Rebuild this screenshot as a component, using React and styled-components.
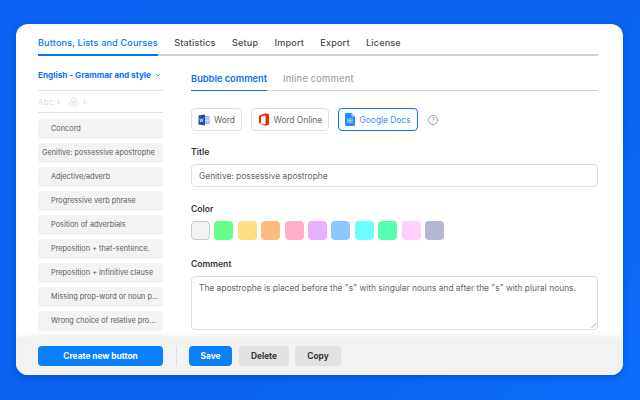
import styled, {createGlobalStyle} from 'styled-components';
import {ChevronDown, ArrowDown} from 'lucide-react';

const GlobalStyle = createGlobalStyle`
  html, body {
    margin: 0;
    padding: 0;
    width: 640px;
    height: 400px;
    overflow: hidden;
  }
  body {
    font-family: "Inter", "Liberation Sans", sans-serif;
  }
`;

const navItems = ['Statistics', 'Setup', 'Import', 'Export', 'License'];

const listItems = [
  {label: 'Concord'},
  {label: 'Genitive: possessive apostrophe', wide: true},
  {label: 'Adjective/adverb'},
  {label: 'Progressive verb phrase'},
  {label: 'Position of adverbials'},
  {label: 'Preposition + that-sentence.'},
  {label: 'Preposition + infinitive clause'},
  {label: 'Missing prop-word or noun p...'},
  {label: 'Wrong choice of relative pro...'},
  {label: ''}
];

const colors = ['#f2f2f2', '#66ff8c', '#ffdf80', '#ffbb80', '#ffb0c8', '#e8b0ff', '#8cc8ff', '#6cfdff', '#55ffb0', '#ffd0fa', '#b3b6d4'];

const Page = styled.div`
  width: 640px;
  height: 400px;
  box-sizing: border-box;
  padding: 24px 17px 25px 16px;
  background: linear-gradient(135deg, #0a62f2 0%, #0864ee 60%, #0a6dfa 100%);
`;

const Card = styled.div`
  height: 100%;
  display: flex;
  flex-direction: column;
  background: #fff;
  border-radius: 12px;
  overflow: hidden;
  box-shadow: 0 2px 6px rgba(0, 40, 140, 0.35);
`;

const Nav = styled.nav`
  display: flex;
  gap: 16.4px;
  height: 30px;
  margin: 0 25px 0 22px;
  border-bottom: 2px solid #ccd1d6;
  flex-shrink: 0;
`;

const NavItem = styled.div`
  height: 32px;
  box-sizing: border-box;
  line-height: 37px;
  font-size: 9.1px;
  font-weight: 500;
  letter-spacing: 0.15px;
  white-space: nowrap;
  color: ${props => props.$active ? '#0a73f5' : '#4a4d50'};
  border-bottom: 2px solid ${props => props.$active ? '#0a73f5' : 'transparent'};
`;

const Main = styled.div`
  flex: 1;
  min-height: 0;
  display: flex;
  gap: 28px;
  padding: 0 25px 0 22px;
  overflow: hidden;
`;

const Sidebar = styled.div`
  width: 125px;
  flex-shrink: 0;
`;

const LanguageSelect = styled.div`
  height: 35px;
  box-sizing: border-box;
  display: flex;
  align-items: center;
  gap: 3px;
  padding-top: 4px;
  border-bottom: 1px solid #dfe1e4;
  font-size: 8.2px;
  font-weight: 700;
  white-space: nowrap;
  color: #0a73f5;
  svg {
    width: 8px;
    height: 8px;
  }
`;

const SortBar = styled.div`
  height: 21px;
  display: flex;
  align-items: center;
  gap: 5px;
  border-bottom: 1px solid #dfe1e4;
  color: #dcdcdc;
  font-size: 8px;
`;

const SortGroup = styled.span`
  display: flex;
  align-items: center;
  gap: 1px;
`;

const List = styled.div`
  display: flex;
  flex-direction: column;
  gap: 4px;
  margin-top: 6px;
`;

const ListItem = styled.div`
  height: 20px;
  flex-shrink: 0;
  line-height: 20px;
  padding-left: ${props => props.$wide ? '4px' : '13px'};
  border-radius: 4px;
  background: ${props => props.$dim ? '#e6e6e6' : '#f3f3f3'};
  color: #5c5c5c;
  font-size: 7.35px;
  white-space: nowrap;
`;

const Content = styled.div`
  flex: 1;
  min-width: 0;
`;

const Tabs = styled.div`
  height: 35px;
  display: flex;
  gap: 16px;
  box-sizing: border-box;
  border-bottom: 1.5px solid #ccd1d6;
`;

const Tab = styled.div`
  height: 35px;
  box-sizing: border-box;
  line-height: 46px;
  font-size: 9.3px;
  font-weight: ${props => props.$active ? 600 : 500};
  letter-spacing: ${props => props.$active ? 0 : '0.2px'};
  white-space: nowrap;
  color: ${props => props.$active ? '#0a73f5' : '#a3a5a8'};
  border-bottom: 1.5px solid ${props => props.$active ? '#0a73f5' : 'transparent'};
`;

const Editors = styled.div`
  display: flex;
  align-items: center;
  gap: 8.5px;
  margin-top: 17px;
`;

const Editor = styled.div`
  height: 23px;
  box-sizing: border-box;
  display: flex;
  align-items: center;
  gap: ${props => props.$active ? 5 : 4}px;
  padding: 0 6px;
  border-radius: 4px;
  border: 1px solid ${props => props.$active ? '#0a73f5' : '#dfdfdf'};
  color: ${props => props.$active ? '#3f8ef5' : '#666'};
  font-size: 8.4px;
  white-space: nowrap;
`;

const Help = styled.div`
  width: 10px;
  height: 10px;
  margin-left: 2px;
  box-sizing: border-box;
  border: 1px solid #a3a3a3;
  border-radius: 50%;
  color: #8f8f8f;
  font-size: 6.5px;
  line-height: 8px;
  text-align: center;
`;

const Label = styled.div`
  font-size: 8.6px;
  font-weight: 600;
  line-height: 12px;
  color: #333;
  margin-top: ${props => props.$top}px;
  margin-bottom: 6px;
`;

const TitleInput = styled.input`
  display: block;
  width: 100%;
  height: 23px;
  box-sizing: border-box;
  padding: 0 7px;
  border: 1px solid #dfdfdf;
  border-radius: 4px;
  outline: none;
  color: #666;
  font-family: inherit;
  font-size: 8.4px;
`;

const Swatches = styled.div`
  display: flex;
  gap: 4.4px;
`;

const Swatch = styled.div`
  width: 19px;
  height: 19px;
  box-sizing: border-box;
  border-radius: 4px;
  background: ${props => props.$color};
  border: ${props => props.$selected ? '1px solid #c9c9c9' : 'none'};
`;

const CommentArea = styled.textarea`
  display: block;
  width: 100%;
  height: 54px;
  box-sizing: border-box;
  padding: 5px 7px;
  border: 1px solid #dfdfdf;
  border-radius: 4px;
  outline: none;
  color: #666;
  font-family: inherit;
  font-size: 8.4px;
  line-height: 12px;
  &::-webkit-resizer {
    background: linear-gradient(135deg, transparent 40%, #d2d2d2 40%, #d2d2d2 62%, transparent 62%) no-repeat right 1px bottom 1px / 5px 5px;
  }
`;

const Footer = styled.div`
  height: 38px;
  flex-shrink: 0;
  display: flex;
  align-items: center;
  padding: 0 25px 0 22px;
  background: #f2f2f2;
  box-shadow: 0 -3px 4px rgba(245, 245, 245, 0.9);
  position: relative;
`;

const Button = styled.div`
  width: ${props => props.$width}px;
  height: 20px;
  line-height: 20px;
  margin-right: ${props => props.$gap || 0}px;
  text-align: center;
  border-radius: 4px;
  background: ${props => props.$primary ? '#0a80fb' : '#e2e2e2'};
  color: ${props => props.$primary ? '#fff' : '#333'};
  font-size: 8.3px;
  font-weight: 700;
`;

const Divider = styled.div`
  width: 1px;
  height: 20px;
  margin: 0 12.5px;
  background: #dfdfdf;
`;

function WordIcon() {
  return (
    <svg width="12" height="12" viewBox="0 0 12 12">
      <rect x="5" y="2" width="6.5" height="8" fill="#8fb0e6" />
      <path d="M6 3.5h5M6 5h5M6 6.5h5M6 8h5" stroke="#fff" strokeWidth="0.6" />
      <path d="M0.5 1.6L7 0.4v11.2L0.5 10.4z" fill="#1b4fb0" />
      <path d="M1.8 4l0.8 4 0.9-3 0.9 3 0.8-4" fill="none" stroke="#fff" strokeWidth="0.6" />
    </svg>
  );
}

function OfficeIcon() {
  return (
    <svg width="12" height="13" viewBox="0 0 12 13">
      <path d="M1 2.8L7.6 0.3 11 1.3v10.4l-3.4 1L1 10.3l6.6 0.9V2.4L3 3.4v6.2l-2 0.7z" fill="#eb2a00" />
    </svg>
  );
}

function DocsIcon() {
  return (
    <svg width="10" height="13" viewBox="0 0 10 13">
      <path d="M1 0h5.5L10 3.5V12a1 1 0 0 1-1 1H1a1 1 0 0 1-1-1V1a1 1 0 0 1 1-1z" fill="#2a8df5" />
      <path d="M6.5 0L10 3.5H6.5z" fill="#a9d0fa" />
      <path d="M2.2 6h5.6M2.2 7.6h5.6M2.2 9.2h5.6" stroke="#d5e8fd" strokeWidth="0.8" />
    </svg>
  );
}

function GroupIcon() {
  return (
    <svg width="11" height="10" viewBox="0 0 11 10" fill="none" stroke="#dcdcdc" strokeWidth="0.8">
      <circle cx="5.5" cy="2.6" r="2" />
      <circle cx="2.8" cy="7" r="2" />
      <circle cx="8.2" cy="7" r="2" />
    </svg>
  );
}

export default function App() {
  return (
    <Page>
      <GlobalStyle />
      <Card>
        <Nav>
          <NavItem $active>Buttons, Lists and Courses</NavItem>
          {navItems.map(item => <NavItem key={item}>{item}</NavItem>)}
        </Nav>
        <Main>
          <Sidebar>
            <LanguageSelect>
              English - Grammar and style
              <ChevronDown />
            </LanguageSelect>
            <SortBar>
              <SortGroup>Abc <ArrowDown size={9} /></SortGroup>
              <SortGroup><GroupIcon /> <ArrowDown size={9} /></SortGroup>
            </SortBar>
            <List>
              {listItems.map((item, index) => (
                <ListItem key={index} $wide={item.wide} $dim={!item.label}>{item.label}</ListItem>
              ))}
            </List>
          </Sidebar>
          <Content>
            <Tabs>
              <Tab $active>Bubble comment</Tab>
              <Tab>Inline comment</Tab>
            </Tabs>
            <Editors>
              <Editor><WordIcon />Word</Editor>
              <Editor><OfficeIcon />Word Online</Editor>
              <Editor $active><DocsIcon />Google Docs</Editor>
              <Help>?</Help>
            </Editors>
            <Label $top={15}>Title</Label>
            <TitleInput readOnly defaultValue="Genitive: possessive apostrophe" />
            <Label $top={16}>Color</Label>
            <Swatches>
              {colors.map((color, index) => <Swatch key={color} $color={color} $selected={index === 0} />)}
            </Swatches>
            <Label $top={18}>Comment</Label>
            <CommentArea readOnly defaultValue={'The apostrophe is placed before the "s" with singular nouns and after the "s" with plural nouns.'} />
          </Content>
        </Main>
        <Footer>
          <Button $primary $width={125}>Create new button</Button>
          <Divider />
          <Button $primary $width={43} $gap={7}>Save</Button>
          <Button $width={50} $gap={6}>Delete</Button>
          <Button $width={46}>Copy</Button>
        </Footer>
      </Card>
    </Page>
  );
}
